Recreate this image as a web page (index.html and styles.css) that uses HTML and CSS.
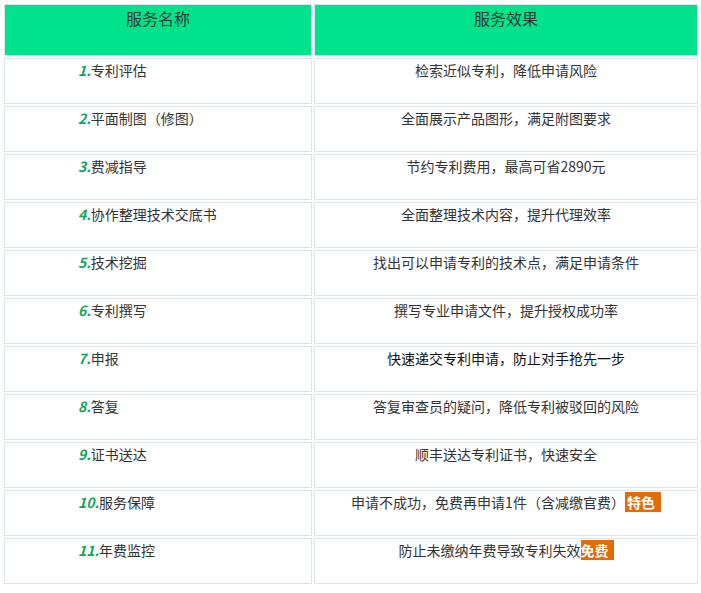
FILE: index.html
```html
<!DOCTYPE html>
<html lang="zh-CN">
<head>
<meta charset="utf-8">
<title>服务</title>
<link rel="stylesheet" href="styles.css">
</head>
<body>
<div class="table">
  <div class="cell head">服务名称</div>
  <div class="cell head">服务效果</div>

  <div class="cell name"><b class="num">1.</b>专利评估</div>
  <div class="cell desc">检索近似专利，降低申请风险</div>

  <div class="cell name"><b class="num">2.</b>平面制图（修图）</div>
  <div class="cell desc">全面展示产品图形，满足附图要求</div>

  <div class="cell name"><b class="num">3.</b>费减指导</div>
  <div class="cell desc">节约专利费用，最高可省2890元</div>

  <div class="cell name"><b class="num">4.</b>协作整理技术交底书</div>
  <div class="cell desc">全面整理技术内容，提升代理效率</div>

  <div class="cell name"><b class="num">5.</b>技术挖掘</div>
  <div class="cell desc">找出可以申请专利的技术点，满足申请条件</div>

  <div class="cell name"><b class="num">6.</b>专利撰写</div>
  <div class="cell desc">撰写专业申请文件，提升授权成功率</div>

  <div class="cell name"><b class="num">7.</b>申报</div>
  <div class="cell desc dark">快速递交专利申请，防止对手抢先一步</div>

  <div class="cell name"><b class="num">8.</b>答复</div>
  <div class="cell desc">答复审查员的疑问，降低专利被驳回的风险</div>

  <div class="cell name"><b class="num">9.</b>证书送达</div>
  <div class="cell desc">顺丰送达专利证书，快速安全</div>

  <div class="cell name"><b class="num">10.</b>服务保障</div>
  <div class="cell desc">申请不成功，免费再申请1件（含减缴官费）<span class="badge badge-wide">特色</span></div>

  <div class="cell name"><b class="num">11.</b>年费监控</div>
  <div class="cell desc">防止未缴纳年费导致专利失效<span class="badge">免费</span></div>
</div>
</body>
</html>
```

FILE: styles.css
```css
html, body {
  margin: 0;
  padding: 0;
  background: #ffffff;
}

body {
  font-family: "Noto Sans CJK SC", "Microsoft YaHei", sans-serif;
  color: #333333;
}

.table {
  display: grid;
  grid-template-columns: 308px 384px;
  grid-template-rows: 52px repeat(11, 46px);
  gap: 2px;
  padding: 4px;
  width: max-content;
}

.cell {
  box-sizing: border-box;
  border: 1px solid #dbe4ef;
  font-size: 14px;
  line-height: 21px;
  padding-top: 1px;
  white-space: nowrap;
}

.head {
  background: #00e38c;
  font-size: 16px;
  padding-top: 3px;
  text-align: center;
  color: #2f3a36;
}

.name {
  padding-left: 73px;
}

.desc {
  text-align: center;
}

.dark {
  color: #111111;
}

.num {
  color: #12a55a;
  font-style: italic;
  font-weight: 700;
}

.badge {
  background: #e36c0a;
  color: #ffffff;
  font-weight: 700;
  padding: 0 5px 0 0;
}

.badge-wide {
  padding: 0 6px 0 2px;
}
```
